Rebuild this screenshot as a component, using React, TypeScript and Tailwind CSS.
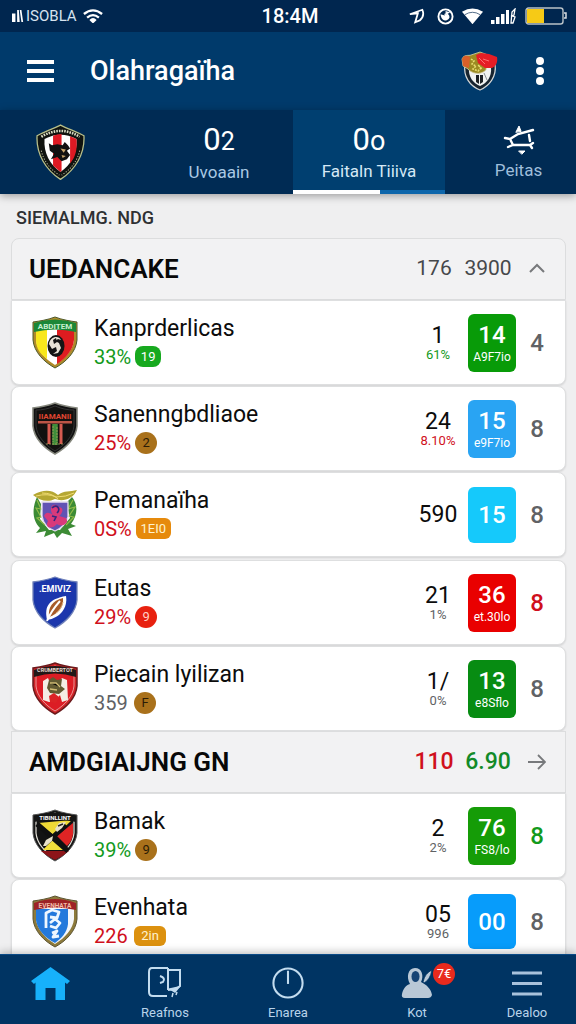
import type { ReactNode } from "react";

type Tone = "green" | "red" | "gray" | "black";

const toneText: Record<Tone, string> = {
  green: "text-[#129a1c]",
  red: "text-[#d0101c]",
  gray: "text-[#606265]",
  black: "text-[#0c0c0c]",
};

const SHIELD = "M23 1C31 4 38 5 45 6V24C44 36 34 46 23 52C12 46 2 36 1 24V6C8 5 15 4 23 1Z";
const INNER = "M23 4C30 7 36 8 42 8V24C41 34 33 43 23 49C13 43 5 34 4 24V8C10 8 16 7 23 4Z";

function Crest({ label, children, className = "w-full" }: { label: string; children: ReactNode; className?: string }) {
  return (
    <svg viewBox="0 0 46 53" role="img" aria-label={label} className={className}>
      {children}
    </svg>
  );
}

function BandText({ children, fill = "#fff", y = 14, size = 7 }: { children: string; fill?: string; y?: number; size?: number }) {
  return (
    <text x="23" y={y} textAnchor="middle" fontSize={size} fontWeight="700" fill={fill} fontFamily="Roboto, sans-serif">
      {children}
    </text>
  );
}

function ClubCrest() {
  return (
    <Crest label="Club" className="w-[49px]">
      <path d="M23 1C31 5 38 7 45 11C46 28 37 43 23 52C9 43 0 28 1 11C8 7 15 5 23 1Z" fill="#10130f" stroke="#b9c08a" strokeWidth="1.200" />
      <path d="M5 12Q23 1 41 12" fill="none" stroke="#d9dcc4" strokeWidth="2.400" strokeDasharray="1.500 1" />
      <path d="M5 25C7 35 14 43 22 48M41 25C39 35 32 43 24 48" fill="none" stroke="#a8ab91" strokeWidth="1" strokeDasharray="1.200 1.400" />
      <path d="M8 14Q23 6 38 14C39 27 33 38 23 45C13 38 7 27 8 14Z" fill="#fff" />
      <path d="M16 11Q20 9.500 24 9.500V44L23 45L16 39ZM32 11.500L38 14C39 24 37 31 32 37Z" fill="#de1a23" />
      <path d="M12 18L15 20L20 19L25 20L27 17L30 20L32 23L29 25L32 29L29 33L24 35L20 31L14 33L17 28L13 25Z" fill="#111" />
      <path d="M23 23L28 24L26 27ZM24 29L28 30L25 32Z" fill="#c8a56b" />
    </Crest>
  );
}

function HeaderCrest() {
  return (
    <svg viewBox="0 0 37 40" role="img" aria-label="Team" className="w-[37px]">
      <path d="M4 13H34C36 26 28 35 19 39C9 35 2 26 4 13Z" fill="#17242f" stroke="#d5d8d8" strokeWidth="1.200" />
      <path d="M8 16H30C31 26 26 32 19 35C12 32 7 26 8 16Z" fill="#f1f3f1" />
      <path d="M15 24H18V33L15 31ZM19 24H22V31L19 33Z" fill="#1b2024" />
      <path d="M23 22L26 29" stroke="#8b9093" strokeWidth="1" />
      <path d="M1 8C3 3 8 5 10 4L19 1L27 4L25 19C19 25 10 22 7 18L2 15Z" fill="#9b8b22" stroke="#d8cfaa" strokeWidth="0.800" />
      <path d="M1 8C3 3 7 5 9 6L8 17L2 15Z" fill="#d9602a" />
      <path d="M10 8L13 10L11 13L15 15L12 18L17 20L20 17L17 14L21 18" fill="none" stroke="#eadf73" strokeWidth="1.500" strokeDasharray="2 1" />
      <path d="M15 4L20 2L28 3L36 6C37 11 35 15 31 17L24 17L17 12Z" fill="#e51d25" />
      <path d="M18 7L24 13M22 8L28 10" stroke="#ff777b" strokeWidth="0.900" />
    </svg>
  );
}

const crests: Record<string, ReactNode> = {
  kan: (
    <>
      <path d={SHIELD} fill="#b08a2a" stroke="#4c5a2c" />
      <path d={INNER} fill="#fff" />
      <path d="M4 14H15V43C8 38 4 32 4 24Z" fill="#f8e71c" />
      <path d="M25 14H42V24C41 34 34 42 25 48Z" fill="#de1c20" />
      <path d="M2 7Q23 0 44 7V16Q23 11 2 16Z" fill="#1b8737" />
      <BandText size={8} y={13} fill="#c9efcf">ABDITEM</BandText>
      <ellipse cx="24" cy="30" rx="8.500" ry="11" fill="#151515" />
      <path d="M17 28C18 20 27 19 29 24L26 23L23 25L27 27L29 32L26 37L21 38L25 35L24 31L20 33Z" fill="#e9e3d7" />
      <path d="M21 24L24 22L25 26L22 28Z" fill="#151515" />
    </>
  ),
  san: (
    <>
      <path d={SHIELD} fill="#111" stroke="#85877d" strokeWidth="1.600" />
      <path d={INNER} fill="#12110f" stroke="#333" />
      <BandText fill="#e04632" y={17} size={8}>IIAMANII</BandText>
      <path d="M6 19H40V21.500H6Z" fill="#bb5546" />
      <path d="M17 22V42M29 22V42" stroke="#d65b50" strokeWidth="3" />
      <path d="M23 22V43" stroke="#3f8d3b" strokeWidth="5.500" />
      <path d="M21 24V40M25 25V41M14 42H32" stroke="#a9a05a" strokeWidth="0.800" strokeDasharray="2 1" />
    </>
  ),
  pem: (
    <>
      <path d="M5 9C0 20 0 32 8 40L4 45L14 43L12 49L22 45L25 50L30 45L40 48L36 41L44 38L39 36C47 25 45 15 40 9L34 15L38 30L28 42H17L8 31L9 16Z" fill="#3c8b35" />
      <path d="M5 12L9 21L4 20L9 29L5 30L13 37M41 12L36 21L43 19L37 28L42 29L34 37" fill="none" stroke="#91ba48" strokeWidth="1.200" />
      <path d="M10 14H36V29C33 38 28 41 23 43C15 40 11 35 10 28Z" fill="#6253b4" stroke="#e6ddee" strokeWidth="1.300" />
      <path d="M12 28C14 23 18 25 21 27C15 18 23 14 27 19C33 20 30 26 27 28L34 30C38 35 30 40 25 36C20 42 12 40 16 33Z" fill="#d83a7b" />
      <path d="M20 20C25 15 29 21 25 25M20 28L24 29L22 33" fill="none" stroke="#312880" strokeWidth="1.600" />
      <path d="M1 7C12 1 20 2 26 7C32 2 38 4 45 2C41 11 31 14 23 11C15 15 7 12 1 7Z" fill="#b5a733" />
      <path d="M4 8Q16 5 24 9Q34 9 42 5M10 5Q20 5 26 11" fill="none" stroke="#f0dc74" strokeWidth="1" />
    </>
  ),
  eut: (
    <>
      <path d={SHIELD} fill="#1b38a9" stroke="#7182ba" strokeWidth="1.300" />
      <path d={INNER} fill="#1c36ad" />
      <BandText y={16} size={9}>.EMIVIZ</BandText>
      <path d="M15 44C12 30 17 23 34 20C36 32 28 42 15 44Z" fill="#fff" />
      <path d="M17 41C16 31 20 25 31 22C32 31 26 38 17 41Z" fill="#a75b2a" />
      <path d="M15 45Q19 35 28 25" fill="none" stroke="#fff" strokeWidth="2" />
      <path d="M24 37Q29 34 31 26" fill="none" stroke="#ddae7d" strokeWidth="1" />
    </>
  ),
  pie: (
    <>
      <path d={SHIELD} fill="#cf2226" stroke="#6b1a1c" strokeWidth="1.500" />
      <path d={INNER} fill="#dc1d25" stroke="#f1b6b4" strokeWidth="0.800" />
      <path d="M2 8Q23 0 44 8V15Q23 8 2 15Z" fill="#211817" />
      <BandText y={10} size={5.500} fill="#e8d8cf">CRUMBERTOT</BandText>
      <path d="M11 19L16 16L18 21L28 19L30 16L35 18L36 38L30 40L28 33L22 40L17 40L11 38Z" fill="#f4eee5" />
      <path d="M17 18L21 15L25 18L30 17L29 24L33 27L27 32L18 31L15 26Z" fill="#625b32" />
      <path d="M18 21L24 21L28 25M18 27L25 28" stroke="#d1bd74" strokeWidth="1.300" />
      <path d="M17 34L22 31L27 35L24 41L18 40Z" fill="#db2326" />
    </>
  ),
  bam: (
    <>
      <path d={SHIELD} fill="#161616" stroke="#555" strokeWidth="1" />
      <path d={INNER} fill="#131313" stroke="#e5e2da" strokeWidth="1.200" />
      <path d="M6 14L40 11L23 27Z" fill="#efd936" />
      <path d="M41 14V25C40 31 38 34 35 37L25 27Z" fill="#df2424" />
      <path d="M22 28L35 41H11Z" fill="#f2df3c" />
      <path d="M9 42H37Q31 47 23 51Q15 47 9 42Z" fill="#8d1519" />
      <path d="M2 7Q23 0 44 7V13Q23 8 2 13Z" fill="#151515" />
      <BandText y={11} size={6}>TIBINLLINT</BandText>
      <path d="M5 15L36 42M11 37L34 16" stroke="#101010" strokeWidth="5" />
      <path d="M11 37L14 31L21 27L20 32L14 37ZM23 20L27 14L34 13L30 19L25 23Z" fill="#e8e1ca" />
      <path d="M26 17L31 15" stroke="#222" strokeWidth="1.500" />
    </>
  ),
  eve: (
    <>
      <path d={SHIELD} fill="#8d7a3b" stroke="#5c5432" />
      <path d={INNER} fill="#f5f7fa" />
      <path d="M4 14H36V29C35 37 30 43 23 48C13 43 5 34 4 25Z" fill="#2379dc" />
      <path d="M2 8Q23 0 44 8V15Q23 10 2 15Z" fill="#9d2225" />
      <BandText y={13} size={6.500} fill="#f0b9a5">EVENHATA</BandText>
      <path d="M14 33V18L20 15L27 17L25 23L18 22M18 28L23 24L28 28L24 33L18 31M20 38L25 36L21 42L27 41" fill="none" stroke="#eef7ff" strokeWidth="2.800" strokeLinejoin="round" />
    </>
  ),
};

type Row = {
  crest: string;
  name: string;
  pct: string;
  pctTone: Tone;
  chip: string;
  chipClass: string;
  stat: string;
  statSub?: string;
  statTone?: Tone;
  score: string;
  scoreSub?: string;
  scoreClass: string;
  end: string;
  endTone: Tone;
  gap: string;
};

const round = "w-[22px] h-[22px] rounded-full";

const first: Row[] = [
  { crest: "kan", name: "Kanprderlicas", pct: "33%", pctTone: "green", chip: "19", chipClass: "w-[26px] h-[21px] rounded-lg bg-[#17a91f] text-white", stat: "1", statSub: "61%", statTone: "green", score: "14", scoreSub: "A9F7io", scoreClass: "h-[58px] bg-[#089b08]", end: "4", endTone: "gray", gap: "mb-px" },
  { crest: "san", name: "Sanenngbdliaoe", pct: "25%", pctTone: "red", chip: "2", chipClass: `${round} bg-[#a9711b] text-[#2b1c06]`, stat: "24", statSub: "8.10%", statTone: "red", score: "15", scoreSub: "e9F7io", scoreClass: "h-[58px] bg-[#29a4f3]", end: "8", endTone: "gray", gap: "mb-px" },
  { crest: "pem", name: "Pemanaïha", pct: "0S%", pctTone: "red", chip: "1EI0", chipClass: "w-[35px] h-[21px] rounded-md bg-[#e68a0c] text-[#fff3cf]", stat: "590", score: "15", scoreClass: "h-[56px] bg-[#15c9fb]", end: "8", endTone: "gray", gap: "mb-[3px]" },
  { crest: "eut", name: "Eutas", pct: "29%", pctTone: "red", chip: "9", chipClass: `${round} bg-[#e8210f] text-[#ffd1c4]`, stat: "21", statSub: "1%", statTone: "gray", score: "36", scoreSub: "et.30lo", scoreClass: "h-[58px] bg-[#e90000]", end: "8", endTone: "red", gap: "mb-px" },
  { crest: "pie", name: "Piecain lyilizan", pct: "359", pctTone: "gray", chip: "F", chipClass: `${round} bg-[#a9711b] text-[#2b1c06]`, stat: "1/", statSub: "0%", statTone: "gray", score: "13", scoreSub: "e8Sflo", scoreClass: "h-[58px] bg-[#078c12]", end: "8", endTone: "gray", gap: "" },
];

const second: Row[] = [
  { crest: "bam", name: "Bamak", pct: "39%", pctTone: "green", chip: "9", chipClass: `${round} bg-[#a9711b] text-[#2b1c06]`, stat: "2", statSub: "2%", statTone: "gray", score: "76", scoreSub: "FS8/lo", scoreClass: "h-[58px] bg-[#159c07]", end: "8", endTone: "green", gap: "mb-px" },
  { crest: "eve", name: "Evenhata", pct: "226", pctTone: "red", chip: "2in", chipClass: "w-8 h-5 rounded-md bg-[#dc910f] text-[#fff3cf]", stat: "05", statSub: "996", statTone: "gray", score: "00", scoreClass: "h-[55px] bg-[#079cfb]", end: "8", endTone: "gray", gap: "mb-px" },
];

function TeamRow({ row, top }: { row: Row; top?: boolean }) {
  return (
    <li className={`flex h-[85px] shrink-0 items-center border border-[#dedfe0] bg-white pl-5 pr-[7px] ${top ? "rounded-b-lg" : "rounded-lg"} ${row.gap} shadow-[0_1px_2px_rgba(0,0,0,0.12)]`}>
      <div className="w-[46px] shrink-0">
        <Crest label={row.name}>{crests[row.crest]}</Crest>
      </div>
      <div className="ml-4 min-w-0 flex-1">
        <div className="truncate text-[23px] leading-7 text-[#0c0c0c]">{row.name}</div>
        <div className="flex items-center gap-1">
          <span className={`min-w-9 text-xl leading-7 ${toneText[row.pctTone]}`}>{row.pct}</span>
          <span className={`flex items-center justify-center text-[13px] leading-4 ${row.chipClass}`}>{row.chip}</span>
        </div>
      </div>
      <div className="w-[60px] shrink-0 text-center">
        <div className="text-[23px] leading-6 text-[#0c0c0c]">{row.stat}</div>
        {row.statSub && <div className={`text-[13px] leading-[14px] ${toneText[row.statTone ?? "gray"]}`}>{row.statSub}</div>}
      </div>
      <div className={`flex w-12 shrink-0 flex-col items-center justify-center rounded-md text-white ${row.scoreClass}`}>
        <span className="text-2xl font-medium leading-7">{row.score}</span>
        {row.scoreSub && <span className="text-xs leading-4">{row.scoreSub}</span>}
      </div>
      <div className={`w-[42px] shrink-0 text-center text-2xl font-medium ${toneText[row.endTone]}`}>{row.end}</div>
    </li>
  );
}

function GroupHeader({ title, a, b, aClass, bClass, rounded, icon }: { title: string; a: string; b: string; aClass: string; bClass: string; rounded?: boolean; icon: ReactNode }) {
  return (
    <header className={`flex h-[62px] shrink-0 items-center border border-[#dcddde] bg-[#f2f2f3] pl-[17px] pr-[7px] ${rounded ? "rounded-t-lg" : ""}`}>
      <h2 className="flex-1 text-[26px] font-semibold text-[#080808]">{title}</h2>
      <span className={`w-[52px] text-center ${aClass}`}>{a}</span>
      <span className={`w-14 text-center ${bClass}`}>{b}</span>
      <button type="button" aria-label={`Open ${title}`} className="flex w-[42px] justify-center text-[#77797b]">{icon}</button>
    </header>
  );
}

function StatusBar() {
  return (
    <div className="grid h-8 shrink-0 grid-cols-[1fr_auto_1fr] items-center bg-[#00264f] pl-3 pr-2 text-white">
      <div className="flex items-center gap-0.5">
        <svg viewBox="0 0 14 14" className="w-3" fill="#fff"><path d="M0 4H4V14H0ZM6 0H8L9 14H6ZM9 0H11L13 14H11Z" /></svg>
        <span className="text-[15px] text-[#d7e3ef]">ISOBLA</span>
        <svg viewBox="0 0 22 16" className="ml-1 w-5" fill="none" stroke="#fff" strokeWidth="2.600"><path d="M1 5.500Q11-2.500 21 5.500M4.500 9.500Q11 4 17.500 9.500" /><path d="M7 12Q11 8 15 12L11 16Z" fill="#fff" stroke="none" /></svg>
      </div>
      <span className="text-xl font-medium">18:4M</span>
      <div className="flex items-center justify-end gap-2">
        <svg viewBox="0 0 18 18" className="w-4" fill="none" stroke="#fff" strokeWidth="2"><path d="M1 7L15 2Q18 9 12 14L7 16L10 6L1 7Z" /></svg>
        <svg viewBox="0 0 18 18" className="ml-1 w-[17px]" fill="none" stroke="#fff" strokeWidth="2"><circle cx="9" cy="9" r="7.500" /><path d="M5 8Q6 13 10 12Q14 10 11 7L8 9Z" fill="#fff" /><path d="M9 4L12 5L8 7" strokeWidth="1.500" /></svg>
        <svg viewBox="0 0 22 17" className="w-[21px]" fill="#fff"><path d="M0 4Q11-3 22 4L11 17Z" /><path d="M3 7Q11 2 19 7" fill="none" stroke="#00264f" strokeWidth="0.700" /></svg>
        <svg viewBox="0 0 26 17" className="w-[26px]" fill="#fff"><path d="M0 12H3.500V16H0ZM5 9H8.500V16H5ZM10 6H13.500V16H10ZM15 2H18V16H15Z" /><path d="M20 15L21 4L24 1L23 7L21 8L24 9L22 15Z" fill="none" stroke="#fff" strokeWidth="1.300" /></svg>
        <svg viewBox="0 0 43 18" className="w-[43px]"><rect x="1" y="1" width="37" height="16" rx="2.500" fill="none" stroke="#b9c2c8" strokeWidth="1.400" /><path d="M2 2H19V16H2Z" fill="#f6ca16" /><path d="M39 6H41V11H39" fill="none" stroke="#d6dce2" strokeWidth="1.500" /></svg>
      </div>
    </div>
  );
}

export default function App() {
  return (
    <div className="flex h-screen flex-col overflow-hidden bg-[#efeff0] font-['Roboto',sans-serif]">
      <StatusBar />
      <header className="flex h-[78px] shrink-0 items-center bg-[#003a6b] pl-[27px] pr-8 text-white">
        <button type="button" aria-label="Menu" className="flex w-[27px] flex-col gap-[5px]">
          <span className="h-1 bg-white" />
          <span className="h-1 bg-white" />
          <span className="h-1 bg-white" />
        </button>
        <h1 className="ml-9 flex-1 text-[27px] font-medium">Olahragaïha</h1>
        <HeaderCrest />
        <button type="button" aria-label="More options" className="ml-[38px] flex w-2 flex-col gap-0.5">
          <span className="h-2 rounded-full bg-white" />
          <span className="h-2 rounded-full bg-white" />
          <span className="h-2 rounded-full bg-white" />
        </button>
      </header>

      <nav aria-label="Sections" className="z-10 grid h-[84px] shrink-0 grid-cols-[145fr_148fr_152fr_131fr] bg-[#002b54] text-white shadow-[0_2px_8px_rgba(0,0,0,0.35)]">
        <button type="button" aria-label="Club" className="flex items-center justify-center pr-6"><ClubCrest /></button>
        <button type="button" className="flex flex-col items-center pt-3">
          <span className="text-[31px] leading-9">0<span className="text-[25px]">2</span></span>
          <span className="text-[17px] leading-6 text-[#a9c9e4]">Uvoaain</span>
        </button>
        <button type="button" className="flex flex-col items-center bg-[#003f70] pt-3">
          <span className="text-[31px] leading-9">0<span className="text-[27px]">o</span></span>
          <span className="text-[17px] leading-6 text-[#d5e8f5]">Faitaln Tiiiva</span>
          <span className="mt-auto flex h-1 w-full bg-[#0d66ab]"><span className="w-[57%] bg-white" /></span>
        </button>
        <button type="button" className="flex flex-col items-center pl-4 pt-3">
          <span className="flex h-9 items-center">
            <svg viewBox="0 0 32 30" className="h-[30px] w-8" fill="none" stroke="#fff" strokeWidth="2.400" strokeLinecap="round">
              <path d="M2 13L7 14L15 9L30 5M7 14L10 20M5 22L10 20L27 20L30 18M27 20L29 23M26 10L27 16" />
              <path d="M13 7L16 1L18 6ZM16 26H22L19 29Z" fill="#fff" strokeWidth="1" />
            </svg>
          </span>
          <span className="text-[17px] leading-6 text-[#9fbedb]">Peitas</span>
        </button>
      </nav>

      <main className="flex min-h-0 flex-1 flex-col overflow-y-auto pl-[11px] pr-2.5 [scrollbar-width:none]">
        <h2 className="flex h-11 shrink-0 items-center pl-[5px] pt-1 text-lg font-medium text-[#2e3033]">SIEMALMG. NDG</h2>
        <section>
          <GroupHeader
            title="UEDANCAKE" a="176" b="3900" aClass="text-[21px] text-[#46484b]" bClass="text-[21px] text-[#46484b]" rounded
            icon={<svg viewBox="0 0 16 12" className="w-4" fill="none" stroke="currentColor" strokeWidth="2"><path d="M1 9L8 2L15 9" /></svg>}
          />
          <ul>{first.map((r, i) => <TeamRow key={r.name} row={r} top={i === 0} />)}</ul>
        </section>
        <section>
          <GroupHeader
            title="AMDGIAIJNG GN" a="110" b="6.90" aClass="text-[23px] font-medium text-[#d0101c]" bClass="text-[23px] font-medium text-[#128a28]"
            icon={<svg viewBox="0 0 18 16" className="w-[18px]" fill="none" stroke="currentColor" strokeWidth="1.800"><path d="M0 8H17M10 1L17 8L10 15" /></svg>}
          />
          <ul>{second.map((r, i) => <TeamRow key={r.name} row={r} top={i === 0} />)}</ul>
        </section>
      </main>

      <nav aria-label="Main" className="z-10 grid h-[70px] shrink-0 grid-cols-[100fr_130fr_116fr_142fr_78fr] border-t border-[#0a4a86] bg-[#003463] pr-2.5 text-[13px] text-[#b9d3ea] shadow-[0_-2px_8px_rgba(0,0,0,0.25)]">
        <a href="#home" aria-label="Home" className="flex justify-center pt-3">
          <svg viewBox="0 0 39 33" className="h-[33px] w-[39px]" fill="#17b1fb"><path d="M19.500 0L39 14L36 17L34 15.500V33H24.500V21H14.500V33H4.500V15.500L3 17L0 14Z" /></svg>
        </a>
        <a href="#results" className="flex flex-col items-center pt-3">
          <svg viewBox="0 0 34 32" className="h-8 w-[34px]" fill="none" stroke="#c3dcef" strokeWidth="2">
            <path d="M20 1H4Q1 1 1 5V25Q1 29 5 29H19M20 1V23" /><path d="M21 3H32V19L28 22L20 23M12 9Q18 11 15 15L12 16" />
            <path d="M22 22L31 20L27 25ZM25 26L24 30M29 25L28 28" fill="#c3dcef" strokeWidth="1.500" />
          </svg>
          <span className="mt-1 leading-5">Reafnos</span>
        </a>
        <a href="#events" className="flex flex-col items-center pt-3">
          <svg viewBox="0 0 34 34" className="h-8 w-8" fill="none" stroke="#c3dcef" strokeWidth="2.200"><circle cx="17" cy="17" r="15.500" /><path d="M17 4V18" /></svg>
          <span className="mt-1 leading-5">Enarea</span>
        </a>
        <a href="#account" className="flex flex-col items-center pt-3">
          <span className="relative">
            <svg viewBox="0 0 32 32" className="h-8 w-8" fill="#b9c8d6">
              <path d="M9 17C5 10 7 1 14 1C21 1 23 9 20 15C26 18 30 22 31 28Q30 31 27 31H4Q0 31 1 27C2 22 5 18 9 17Z" />
              <ellipse cx="14.500" cy="9.500" rx="4" ry="5.500" fill="#174474" />
              <path d="M22 15Q24 6 31 3Q29 13 23 16Z" stroke="#003463" strokeWidth="0.800" />
            </svg>
            <span className="absolute -top-1 left-8 flex h-[22px] w-[22px] items-center justify-center rounded-full bg-[#e92a1d] text-[13px] text-white">7€</span>
          </span>
          <span className="mt-1 leading-5">Kot</span>
        </a>
        <a href="#more" className="flex flex-col items-center pt-3">
          <svg viewBox="0 0 30 32" className="h-8 w-[30px]" stroke="#a9c2dc" strokeWidth="2.800"><path d="M0 6H30M0 16.500H30M0 27H30" /></svg>
          <span className="mt-1 leading-5">Dealoo</span>
        </a>
      </nav>
    </div>
  );
}
